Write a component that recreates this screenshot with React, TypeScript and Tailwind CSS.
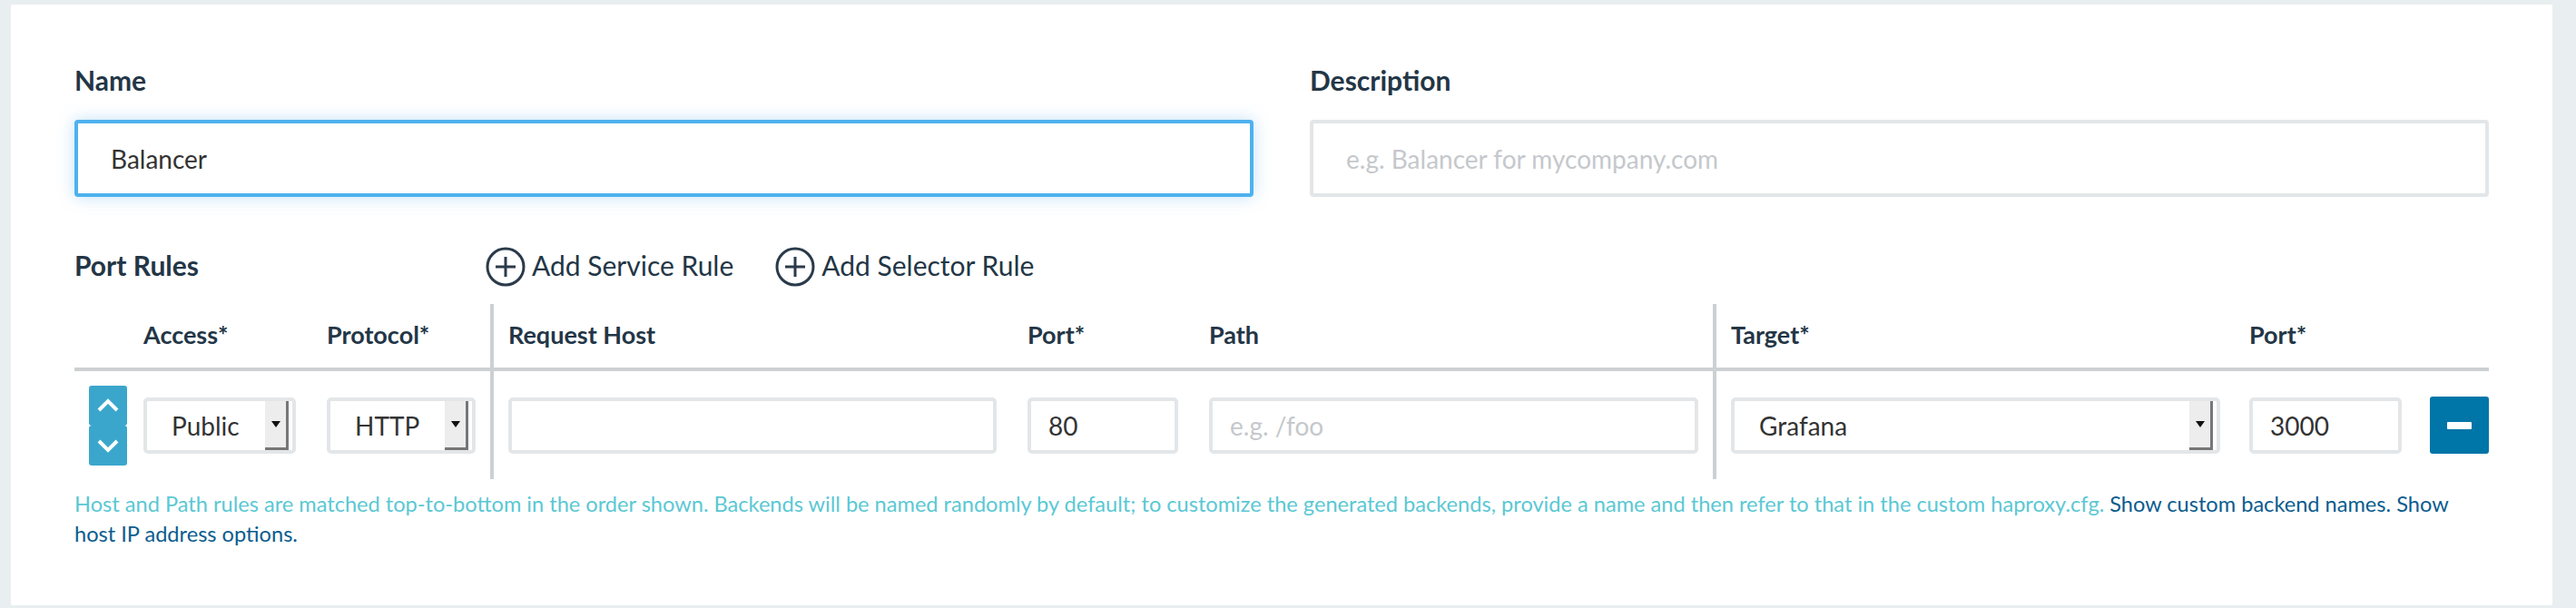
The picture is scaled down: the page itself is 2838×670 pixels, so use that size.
import { ReactNode } from "react";

const labelCls = "text-[30px] leading-[36px] font-bold text-[#233646]";
const thCls = "text-[27px] leading-[36px] font-bold text-[#233646]";

const cols = [
  "w-[59px] pl-[16px]",
  "w-[202px] px-[17px]",
  "w-[197px] pl-[17px] pr-[16px]",
  "w-[575px] border-l-4 border-[#ccd0d2] pl-[16px] pr-[17px]",
  "w-[200px] px-[17px]",
  "w-[572px] pl-[17px] pr-[16px]",
  "w-[575px] border-l-4 border-[#ccd0d2] px-[16px]",
  "w-[200px] px-[16px]",
  "w-[80px] pl-[15px]",
];

function PlusCircle() {
  return (
    <svg width="44" height="44" viewBox="0 0 44 44" className="shrink-0">
      <circle cx="22" cy="22" r="20" fill="none" stroke="#2b3a4a" strokeWidth="3" />
      <path d="M11 22h22M22 11v22" stroke="#2b3a4a" strokeWidth="3" />
    </svg>
  );
}

function Chevron({ down }: { down?: boolean }) {
  return (
    <svg width="26" height="16" viewBox="0 0 26 16">
      <polyline
        points={down ? "3,3 13,13 23,3" : "3,13 13,3 23,13"}
        fill="none"
        stroke="white"
        strokeWidth="4"
      />
    </svg>
  );
}

function TextBox({ value, placeholder }: { value?: string; placeholder?: string }) {
  return (
    <input
      readOnly
      defaultValue={value}
      placeholder={placeholder}
      className="h-[62px] w-full rounded-[5px] border-4 border-[#e3e6e8] bg-white pl-[19px] text-[28px] text-[#333] outline-none placeholder:text-[#c5c8cc]"
    />
  );
}

function Select({ value }: { value: string }) {
  return (
    <div className="flex h-[62px] w-full items-stretch rounded-[5px] border-4 border-[#e3e6e8] bg-white pr-[4px]">
      <div className="flex flex-1 items-center pl-[27px] text-[28px] text-[#333]">{value}</div>
      <div className="flex w-[26px] items-center justify-center border-r-[3px] border-b-[3px] border-[#777] bg-[#ededed]">
        <svg width="10" height="7" viewBox="0 0 10 7">
          <path d="M0 0h10L5 7z" fill="#111" />
        </svg>
      </div>
    </div>
  );
}

function Cell({ i, children, head }: { i: number; children?: ReactNode; head?: boolean }) {
  return (
    <div className={`${cols[i]} shrink-0 flex ${head ? "items-start pt-[16px]" : "items-center"}`}>
      {children}
    </div>
  );
}

export default function App() {
  const heads = ["", "Access*", "Protocol*", "Request Host", "Port*", "Path", "Target*", "Port*", ""];

  return (
    <div className="h-[670px] overflow-hidden bg-[#e9eef0] pt-[5px] pl-[12px] pr-[26px] font-['Lato',sans-serif]">
      <div className="h-[662px] rounded-[2px] bg-white px-[70px] pt-[65px]">
        <div className="grid grid-cols-2 gap-x-[62px]">
          <div>
            <div className={labelCls}>Name</div>
            <input
              readOnly
              defaultValue="Balancer"
              className="mt-[26px] h-[85px] w-full rounded-[4px] border-4 border-[#4eb1ee] bg-white pl-[36px] text-[28px] text-[#333] shadow-[0_0_18px_rgba(82,168,236,0.35)] outline-none"
            />
          </div>
          <div>
            <div className={labelCls}>Description</div>
            <input
              readOnly
              placeholder="e.g. Balancer for mycompany.com"
              className="mt-[26px] h-[85px] w-full rounded-[4px] border-4 border-[#e3e6e8] bg-white pl-[36px] text-[28px] text-[#333] outline-none placeholder:text-[#c5c8cc]"
            />
          </div>
        </div>

        <div className="mt-[55px] flex h-[44px] items-center">
          <div className={`${labelCls} w-[453px] pb-[4px]`}>Port Rules</div>
          <div className="flex items-center gap-[7px]">
            <PlusCircle />
            <span className="pb-[4px] text-[30px] leading-[36px] text-[#233646]">Add Service Rule</span>
          </div>
          <div className="ml-[46px] flex items-center gap-[7px]">
            <PlusCircle />
            <span className="pb-[4px] text-[30px] leading-[36px] text-[#233646]">Add Selector Rule</span>
          </div>
        </div>

        <div className="mt-[19px]">
          <div className="flex h-[74px] border-b-4 border-[#ccd0d2]">
            {heads.map((h, i) => (
              <Cell key={i} i={i} head>
                <span className={thCls}>{h}</span>
              </Cell>
            ))}
          </div>
          <div className="flex h-[119px]">
            <Cell i={0}>
              <div className="flex w-[42px] flex-col">
                <div className="flex h-[44px] items-center justify-center rounded-[3px] bg-[#3ba6cc]">
                  <Chevron />
                </div>
                <div className="flex h-[44px] items-center justify-center rounded-[3px] bg-[#3ba6cc]">
                  <Chevron down />
                </div>
              </div>
            </Cell>
            <Cell i={1}>
              <Select value="Public" />
            </Cell>
            <Cell i={2}>
              <Select value="HTTP" />
            </Cell>
            <Cell i={3}>
              <TextBox />
            </Cell>
            <Cell i={4}>
              <TextBox value="80" />
            </Cell>
            <Cell i={5}>
              <TextBox placeholder="e.g. /foo" />
            </Cell>
            <Cell i={6}>
              <Select value="Grafana" />
            </Cell>
            <Cell i={7}>
              <TextBox value="3000" />
            </Cell>
            <Cell i={8}>
              <button className="flex h-[63px] w-[70px] items-center justify-center rounded-[3px] bg-[#0075a8]">
                <span className="h-[8px] w-[27px] rounded-[1px] bg-white" />
              </button>
            </Cell>
          </div>
        </div>

        <p className="mt-[11px] text-[23.6px] leading-[33px] text-[#5bc8d4]">
          Host and Path rules are matched top-to-bottom in the order shown. Backends will be named randomly by
          default; to customize the generated backends, provide a name and then refer to that in the custom
          haproxy.cfg.{" "}
          <a className="text-[#0b5c8e]">Show custom backend names.</a>{" "}
          <a className="text-[#0b5c8e]">Show host IP address options.</a>
        </p>
      </div>
    </div>
  );
}
